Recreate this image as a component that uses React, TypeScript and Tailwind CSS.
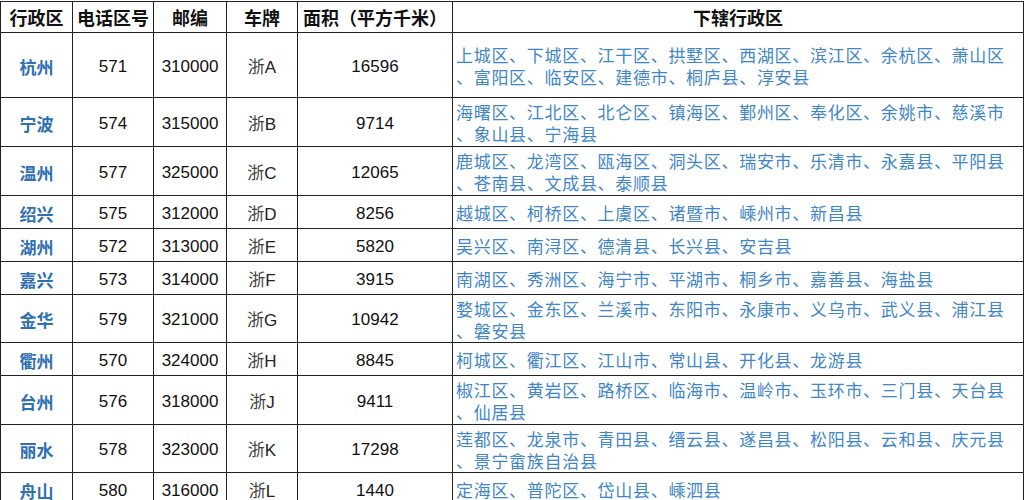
import React from "react";

type Row = {
  city: string;
  code: string;
  post: string;
  plate: string;
  area: string;
  lines: string[];
  h: number;
};

const rows: Row[] = [
  { city: "杭州", code: "571", post: "310000", plate: "A", area: "16596", h: 65, lines: ["上城区、下城区、江干区、拱墅区、西湖区、滨江区、余杭区、萧山区", "、富阳区、临安区、建德市、桐庐县、淳安县"] },
  { city: "宁波", code: "574", post: "315000", plate: "B", area: "9714", h: 49, lines: ["海曙区、江北区、北仑区、镇海区、鄞州区、奉化区、余姚市、慈溪市", "、象山县、宁海县"] },
  { city: "温州", code: "577", post: "325000", plate: "C", area: "12065", h: 49, lines: ["鹿城区、龙湾区、瓯海区、洞头区、瑞安市、乐清市、永嘉县、平阳县", "、苍南县、文成县、泰顺县"] },
  { city: "绍兴", code: "575", post: "312000", plate: "D", area: "8256", h: 33, lines: ["越城区、柯桥区、上虞区、诸暨市、嵊州市、新昌县"] },
  { city: "湖州", code: "572", post: "313000", plate: "E", area: "5820", h: 33, lines: ["吴兴区、南浔区、德清县、长兴县、安吉县"] },
  { city: "嘉兴", code: "573", post: "314000", plate: "F", area: "3915", h: 33, lines: ["南湖区、秀洲区、海宁市、平湖市、桐乡市、嘉善县、海盐县"] },
  { city: "金华", code: "579", post: "321000", plate: "G", area: "10942", h: 48, lines: ["婺城区、金东区、兰溪市、东阳市、永康市、义乌市、武义县、浦江县", "、磐安县"] },
  { city: "衢州", code: "570", post: "324000", plate: "H", area: "8845", h: 33, lines: ["柯城区、衢江区、江山市、常山县、开化县、龙游县"] },
  { city: "台州", code: "576", post: "318000", plate: "J", area: "9411", h: 49, lines: ["椒江区、黄岩区、路桥区、临海市、温岭市、玉环市、三门县、天台县", "、仙居县"] },
  { city: "丽水", code: "578", post: "323000", plate: "K", area: "17298", h: 48, lines: ["莲都区、龙泉市、青田县、缙云县、遂昌县、松阳县、云和县、庆元县", "、景宁畲族自治县"] },
  { city: "舟山", code: "580", post: "316000", plate: "L", area: "1440", h: 33, lines: ["定海区、普陀区、岱山县、嵊泗县"] },
];

const cjk = "font-['Noto_Sans_CJK_SC',sans-serif]";
const num = "font-['Liberation_Sans',sans-serif]";
const cell = "border border-[#222] p-0 pt-[3px] leading-[20px]";

export default function App() {
  return (
    <div className="w-[1025px] h-[500px] overflow-hidden bg-white pt-[1px]">
      <table className="border-collapse table-fixed w-[1023px]">
        <colgroup>
          <col className="w-[72px]" />
          <col className="w-[81px]" />
          <col className="w-[73px]" />
          <col className="w-[71px]" />
          <col className="w-[155px]" />
          <col className="w-[571px]" />
        </colgroup>
        <thead>
          <tr className="h-[31px]">
            {["行政区", "电话区号", "邮编", "车牌", "面积（平方千米）", "下辖行政区"].map((t) => (
              <th key={t} className={`border border-[#222] p-0 ${cjk} text-[18px] font-bold text-[#111] text-center align-middle leading-[20px] whitespace-nowrap`}>
                {t}
              </th>
            ))}
          </tr>
        </thead>
        <tbody>
          {rows.map((r) => (
            <tr key={r.city} style={{ height: r.h }}>
              <td className={`${cell} ${cjk} text-[17px] font-bold text-[#2f6fb3] text-center align-middle`}>{r.city}</td>
              <td className={`${cell} ${num} text-[17px] text-[#111] text-center align-middle`}>{r.code}</td>
              <td className={`${cell} ${num} text-[17px] text-[#111] text-center align-middle`}>{r.post}</td>
              <td className={`${cell} ${num} text-[17px] text-[#222] text-center align-middle`}>
                <span className={`${cjk} text-[#444]`}>浙</span>
                {r.plate}
              </td>
              <td className={`${cell} ${num} text-[17px] text-[#111] text-center align-middle`}>{r.area}</td>
              <td className={`border border-[#222] p-0 pt-[2px] ${cjk} text-[17px] tracking-[0.7px] text-[#3f86c8] text-left align-middle pl-[3px] leading-[22px]`}>
                {r.lines.map((l, i) => (
                  <div key={i} className="whitespace-nowrap">{l}</div>
                ))}
              </td>
            </tr>
          ))}
        </tbody>
      </table>
    </div>
  );
}
